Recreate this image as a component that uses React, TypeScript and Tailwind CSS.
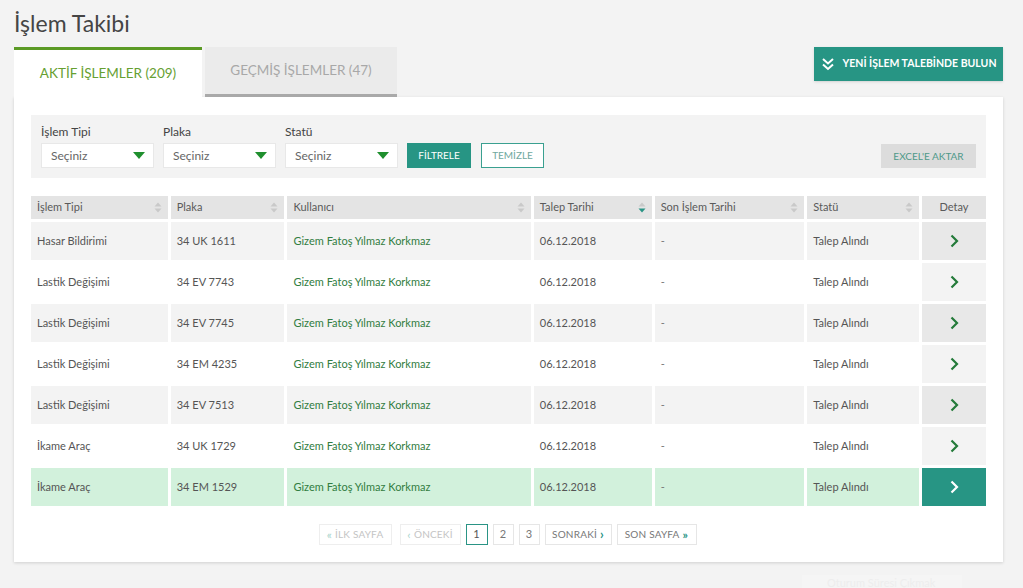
import { type ReactNode } from 'react';

const rows = [
  { tip: 'Hasar Bildirimi', plaka: '34 UK 1611' },
  { tip: 'Lastik Değişimi', plaka: '34 EV 7743' },
  { tip: 'Lastik Değişimi', plaka: '34 EV 7745' },
  { tip: 'Lastik Değişimi', plaka: '34 EM 4235' },
  { tip: 'Lastik Değişimi', plaka: '34 EV 7513' },
  { tip: 'İkame Araç', plaka: '34 UK 1729' },
  { tip: 'İkame Araç', plaka: '34 EM 1529' },
];

const columns = [
  { label: 'İşlem Tipi', w: 'w-[137px]', sort: 'none' },
  { label: 'Plaka', w: 'w-[114px]', sort: 'none' },
  { label: 'Kullanıcı', w: 'w-[244px]', sort: 'none' },
  { label: 'Talep Tarihi', w: 'w-[118px]', sort: 'down' },
  { label: 'Son İşlem Tarihi', w: 'w-[150px]', sort: 'none' },
  { label: 'Statü', w: 'w-[112px]', sort: 'none' },
];

function SortIcon({ active }: { active: boolean }) {
  return (
    <svg width="8" height="11" viewBox="0 0 8 11" className="shrink-0">
      <path d="M4 0.5 L7.5 4.5 H0.5 Z" fill="#c9c9c9" />
      <path d="M4 10.5 L7.5 6.5 H0.5 Z" fill={active ? '#2a9485' : '#c9c9c9'} />
    </svg>
  );
}

function Chevron({ color, size = 14 }: { color: string; size?: number }) {
  return (
    <svg width={size} height={size} viewBox="0 0 14 14">
      <path d="M4.5 1.5 L10 7 L4.5 12.5" fill="none" stroke={color} strokeWidth="2.2" />
    </svg>
  );
}

function Select({ label }: { label: string }) {
  return (
    <div className="flex flex-col">
      <span className="text-[12px] text-[#444] leading-none mb-[5px]">{label}</span>
      <div className="w-[113px] h-[25px] bg-white border border-[#e8e8e8] flex items-center justify-between pl-[9px] pr-[8px]">
        <span className="text-[12px] text-[#666]">Seçiniz</span>
        <svg width="12" height="7" viewBox="0 0 12 7">
          <path d="M0 0 H12 L6 7 Z" fill="#1f8f2e" />
        </svg>
      </div>
    </div>
  );
}

function PageBtn({ children, className }: { children: ReactNode; className?: string }) {
  return (
    <div
      className={`h-[21px] flex items-center justify-center gap-[3px] border text-[10px] tracking-[0.2px] ${className ?? ''}`}
    >
      {children}
    </div>
  );
}

export default function App() {
  return (
    <div
      className="w-[1023px] h-[588px] bg-[#f3f3f3] overflow-hidden relative"
      style={{ fontFamily: 'Lato, "Open Sans", sans-serif' }}
    >
      <h1 className="pl-[14px] pt-[8px] text-[23px] leading-[30px] text-[#454545] font-normal">İşlem Takibi</h1>

      {/* tabs + action */}
      <div className="flex items-end justify-between pl-[14px] pr-[20px] mt-[9px]">
        <div className="flex items-end gap-[3px]">
          <div className="w-[188px] h-[50px] bg-white border-t-[3px] border-[#5b9a25] flex items-center justify-center">
            <span className="text-[13.5px] text-[#66a032]">AKTİF İŞLEMLER (209)</span>
          </div>
          <div className="w-[192px] h-[50px] bg-[#ebebeb] border-b-[3px] border-[#a9a9a9] flex items-center justify-center">
            <span className="text-[13.5px] text-[#a8a8a8]">GEÇMİŞ İŞLEMLER (47)</span>
          </div>
        </div>
        <div className="self-start h-[34px] w-[189px] bg-[#279584] flex items-center justify-center gap-[8px] shadow-sm">
          <svg width="14" height="14" viewBox="0 0 14 14">
            <path d="M2 2 L7 6.5 L12 2 M2 7.5 L7 12 L12 7.5" fill="none" stroke="white" strokeWidth="2" />
          </svg>
          <span className="text-[10.5px] font-bold text-white">YENİ İŞLEM TALEBİNDE BULUN</span>
        </div>
      </div>

      {/* panel */}
      <div className="mx-[14px] w-[989px] bg-white shadow-[0_1px_3px_rgba(0,0,0,0.15)] pt-[18px] pb-[17px] px-[17px]">
        <div className="bg-[#f3f3f3] h-[63px] flex items-end justify-between px-[10px] pb-[10px]">
          <div className="flex items-end gap-[9px]">
            <Select label="İşlem Tipi" />
            <Select label="Plaka" />
            <Select label="Statü" />
            <div className="h-[25px] w-[64px] bg-[#279584] flex items-center justify-center text-[10px] text-white">
              FİLTRELE
            </div>
            <div className="ml-[1px] h-[25px] w-[63px] border border-[#3aa090] bg-white flex items-center justify-center text-[10px] text-[#6fa89e]">
              TEMİZLE
            </div>
          </div>
          <div className="h-[24px] w-[95px] bg-[#dcdcdc] flex items-center justify-center text-[10px] text-[#4f9989]">
            EXCEL'E AKTAR
          </div>
        </div>

        <table className="mt-[15px] -mx-[3px] border-separate border-spacing-[3px] text-[11px]">
          <thead>
            <tr>
              {columns.map((c) => (
                <th key={c.label} className={`${c.w} h-[23px] bg-[#e4e4e4] font-normal text-left text-[#5a5a5a] px-[6px]`}>
                  <div className="flex items-center justify-between">
                    <span>{c.label}</span>
                    <SortIcon active={c.sort === 'down'} />
                  </div>
                </th>
              ))}
              <th className="w-[64px] h-[23px] bg-[#e4e4e4] font-normal text-center text-[#5a5a5a]">Detay</th>
            </tr>
          </thead>
          <tbody>
            {rows.map((r, i) => {
              const selected = i === rows.length - 1;
              const bg = selected ? 'bg-[#d2f1dc]' : i % 2 === 0 ? 'bg-[#f3f3f3]' : 'bg-white';
              const detailBg = selected ? 'bg-[#279584]' : i % 2 === 0 ? 'bg-[#e8e8e8]' : 'bg-[#f3f3f3]';
              return (
                <tr key={i}>
                  <td className={`${bg} h-[38px] px-[6px] text-[#555]`}>{r.tip}</td>
                  <td className={`${bg} px-[6px] text-[#555]`}>{r.plaka}</td>
                  <td className={`${bg} px-[6px] text-[#327d42]`}>Gizem Fatoş Yılmaz Korkmaz</td>
                  <td className={`${bg} px-[6px] text-[#555]`}>06.12.2018</td>
                  <td className={`${bg} px-[6px] text-[#777]`}>-</td>
                  <td className={`${bg} px-[6px] text-[#555]`}>Talep Alındı</td>
                  <td className={`${detailBg}`}>
                    <div className="flex justify-center">
                      <Chevron color={selected ? '#ffffff' : '#247a3a'} />
                    </div>
                  </td>
                </tr>
              );
            })}
          </tbody>
        </table>

        <div className="flex justify-center items-center gap-[5px] mt-[15px] pr-[2px]">
          <PageBtn className="w-[73px] border-[#eeeeee] text-[#c4c4c4]">
            <span className="text-[12px] leading-none text-[#a8d4cc]">«</span>İLK SAYFA
          </PageBtn>
          <PageBtn className="ml-[3px] w-[61px] border-[#eeeeee] text-[#c4c4c4]">
            <span className="text-[12px] leading-none text-[#a8d4cc]">‹</span>ÖNCEKİ
          </PageBtn>
          <PageBtn className="w-[22px] border-[#2a9485] text-[#555] text-[11px]">1</PageBtn>
          <PageBtn className="w-[21px] border-[#e6e6e6] text-[#777] text-[11px]">2</PageBtn>
          <PageBtn className="w-[21px] border-[#e6e6e6] text-[#777] text-[11px]">3</PageBtn>
          <PageBtn className="w-[67px] border-[#e6e6e6] text-[#777]">
            SONRAKİ<span className="text-[13px] leading-none font-bold text-[#2a9485]">›</span>
          </PageBtn>
          <PageBtn className="w-[80px] border-[#e6e6e6] text-[#777]">
            SON SAYFA<span className="text-[12px] leading-none font-bold text-[#2a9485]">»</span>
          </PageBtn>
        </div>
      </div>

      {/* faint footer remnant */}
      <div className="absolute left-[802px] top-[575px] w-[160px] h-[20px] bg-[#f5f5f5] text-[11px] text-[#ededed] pl-[25px]">
        Oturum Süresi Çıkmak
      </div>
    </div>
  );
}
